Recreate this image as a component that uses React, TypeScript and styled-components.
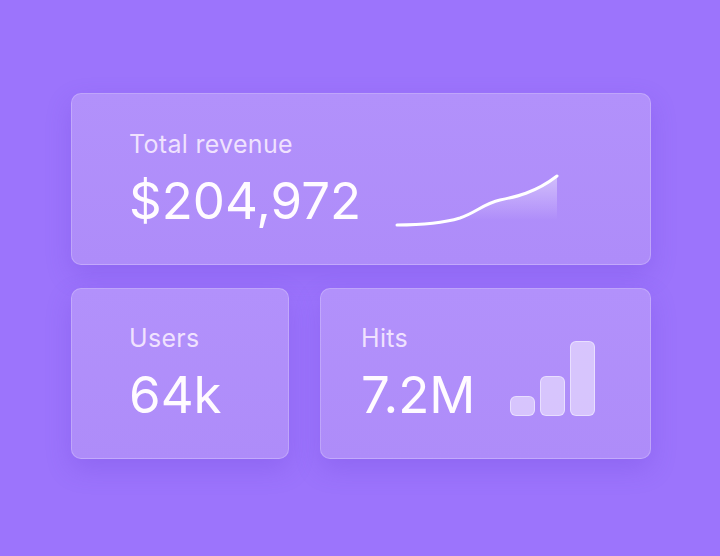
import { FC } from "react";
import styled, { createGlobalStyle } from "styled-components";

const GlobalStyle = createGlobalStyle`
  html, body {
    margin: 0;
    padding: 0;
    background: #9c74fc;
  }
  body {
    font-family: Inter, "Noto Sans", "Liberation Sans", sans-serif;
    -webkit-font-smoothing: antialiased;
  }
`;

const BARS = [20, 40, 75];

const Sparkline: FC = () => (
  <SSpark width="166" height="54" viewBox="0 0 166 54">
    <defs>
      <linearGradient id="sparkFill" x1="0" y1="0" x2="0" y2="46" gradientUnits="userSpaceOnUse">
        <stop offset="0" stopColor="#ffffff" stopOpacity="0.45" />
        <stop offset="1" stopColor="#ffffff" stopOpacity="0" />
      </linearGradient>
    </defs>
    <path
      d="M2 51 C25 51 45 50 65 44 C80 39 90 29 105 26 C120 23 140 19 162 2 L162 54 L2 54 Z"
      fill="url(#sparkFill)"
    />
    <path
      d="M2 51 C25 51 45 50 65 44 C80 39 90 29 105 26 C120 23 140 19 162 2"
      fill="none"
      stroke="#ffffff"
      strokeWidth="3"
      strokeLinecap="round"
    />
  </SSpark>
);

const App: FC = () => {
  return (
    <>
      <GlobalStyle />
      <SPage>
        <SGrid>
          <SCard $wide $padLeft={57}>
            <SLabel>Total revenue</SLabel>
            <SRow>
              <SValue>$204,972</SValue>
              <Sparkline />
            </SRow>
          </SCard>

          <SCard $padLeft={57}>
            <SLabel>Users</SLabel>
            <SRow>
              <SValue>64k</SValue>
            </SRow>
          </SCard>

          <SCard $padLeft={40}>
            <SLabel>Hits</SLabel>
            <SRow>
              <SValue>7.2M</SValue>
              <SBars>
                {BARS.map((h, i) => (
                  <SBar key={i} style={{ height: h }} />
                ))}
              </SBars>
            </SRow>
          </SCard>
        </SGrid>
      </SPage>
    </>
  );
};

const SPage = styled.main`
  min-height: 556px;
  box-sizing: border-box;
  padding: 93px 0 0 71px;
`;

const SGrid = styled.div`
  display: grid;
  grid-template-columns: 218px 331px;
  column-gap: 31px;
  row-gap: 23px;
`;

const SCard = styled.section<{ $wide?: boolean; $padLeft: number }>`
  grid-column: ${(p) => (p.$wide ? "1 / -1" : "auto")};
  height: ${(p) => (p.$wide ? 172 : 171)}px;
  box-sizing: border-box;
  padding-left: ${(p) => p.$padLeft}px;
  display: flex;
  flex-direction: column;
  justify-content: center;
  gap: 19px;
  border-radius: 10px;
  background: linear-gradient(180deg, #b291fb 0%, #ae8cf9 100%);
  border: 1px solid rgba(255, 255, 255, 0.22);
  box-shadow: 0 10px 26px rgba(96, 56, 210, 0.22);
`;

const SLabel = styled.div`
  font-size: 25px;
  line-height: 24px;
  letter-spacing: 0.3px;
  font-weight: 400;
  color: rgba(255, 246, 255, 0.82);
`;

const SRow = styled.div`
  height: 52px;
  display: flex;
  align-items: flex-end;
  gap: 34px;
`;

const SValue = styled.div`
  font-size: 51px;
  line-height: 52px;
  font-weight: 400;
  color: #fffbff;
`;

const SSpark = styled.svg`
  display: block;
  flex-shrink: 0;
  margin-bottom: -1px;
`;

const SBars = styled.div`
  display: flex;
  align-items: flex-end;
  gap: 5px;
  margin-bottom: 5px;
  margin-left: 1px;
`;

const SBar = styled.div`
  width: 25px;
  box-sizing: border-box;
  border-radius: 6px;
  background: rgba(242, 234, 255, 0.6);
  border: 1px solid rgba(255, 255, 255, 0.45);
`;

export default App;
